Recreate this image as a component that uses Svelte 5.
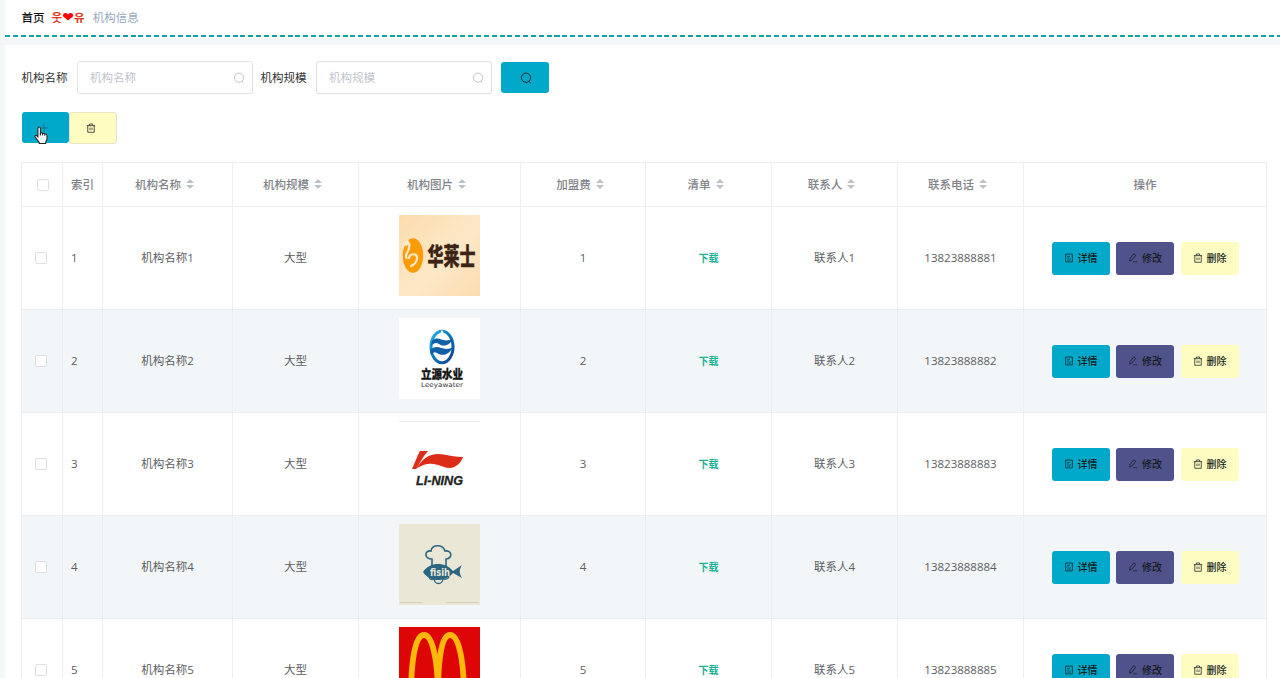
<script>
  let name = "";
  let scale = "";

  const filters = [
    { label: "机构名称", key: "name" },
    { label: "机构规模", key: "scale" },
  ];

  const columns = [
    "机构名称",
    "机构规模",
    "机构图片",
    "加盟费",
    "清单",
    "联系人",
    "联系电话",
  ];

  const widths = [41, 40, 130, 126, 162, 125, 126, 126, 126, 243];

  const rows = [1, 2, 3, 4, 5].map((id) => ({
    id,
    name: `机构名称${id}`,
    scale: "大型",
    fee: id,
    contact: `联系人${id}`,
    phone: `1382388888${id}`,
  }));
</script>

{#snippet searchIcon()}
  <svg class="icon" viewBox="0 0 12 12">
    <circle cx="6" cy="5.7" r="4.6" />
    <path d="M8.8 9.3L10.6 11" />
  </svg>
{/snippet}

{#snippet trashIcon()}
  <svg class="icon" viewBox="0 0 12 12">
    <path d="M1 3.2h10M4 3V1.2h4V3M2.1 3.2v7.9h7.8V3.2M4.8 5.5v3M7.2 5.5v3" />
  </svg>
{/snippet}

<div class="page">
  <nav class="breadcrumb">
    <b>首页</b>
    <span class="separator">웃<i>❤</i>유</span>
    <span class="current">机构信息</span>
  </nav>

  <main>
    <form class="search">
      {#each filters as filter}
        <label for="filter-{filter.key}">{filter.label}</label>
        <div class="field">
          {#if filter.key === "name"}
            <input id="filter-name" placeholder={filter.label} bind:value={name} />
          {:else}
            <input id="filter-scale" placeholder={filter.label} bind:value={scale} />
          {/if}
          {@render searchIcon()}
        </div>
      {/each}
      <button type="button" class="btn primary query" aria-label="查询">
        {@render searchIcon()}
      </button>
    </form>

    <div class="toolbar">
      <button class="btn primary add" aria-label="新增">
        <svg class="icon" viewBox="0 0 12 12"><path d="M6 1v10M1 6h10" /></svg>
        <svg class="cursor" viewBox="0 0 16 20">
          <path
            d="M4.2 11.5V2.4c0-2 2.6-2 2.6 0v5.2c.5-.9 2.2-.7 2.4.4.6-.7 2.1-.5 2.3.6.9-.6 2.3 0 2.3 1.3v3.6c0 1.6-1.3 2.6-1.3 4v1H5.6v-1.2L1.3 11.8c-1-1.5.7-2.7 1.8-1.5z"
          />
          <path d="M6.8 7.6v2.4M9.2 8v2M11.5 8.6v1.6" />
        </svg>
      </button>
      <button class="btn danger remove" aria-label="删除">
        {@render trashIcon()}
      </button>
    </div>

    <table>
      <colgroup>
        {#each widths as width}
          <col style="width: {width}px" />
        {/each}
      </colgroup>
      <thead>
        <tr>
          <th class="check-head"><span class="checkbox"></span></th>
          <th class="index">索引</th>
          {#each columns as column}
            <th>
              <div class="sortable">
                {column}
                <svg class="sort" viewBox="0 0 8 10">
                  <path d="M4 0L8 4H0zM4 10L0 6h8z" />
                </svg>
              </div>
            </th>
          {/each}
          <th>操作</th>
        </tr>
      </thead>
      <tbody>
        {#each rows as row}
          <tr>
            <td class="check"><span class="checkbox"></span></td>
            <td class="index">{row.id}</td>
            <td>{row.name}</td>
            <td>{row.scale}</td>
            <td class="picture">
              <svg viewBox="0 0 81 81">
                {#if row.id === 1}
                  <defs>
                    <linearGradient id="cream" x1="0" y1="0" x2="1" y2="1">
                      <stop offset="0" stop-color="#fbdcae" />
                      <stop offset="0.55" stop-color="#fde8c6" />
                      <stop offset="1" stop-color="#fbdcb0" />
                    </linearGradient>
                  </defs>
                  <rect width="81" height="81" fill="url(#cream)" />
                  <ellipse cx="14" cy="40.5" rx="10.2" ry="17.3" fill="#fb9b06" />
                  <path
                    d="M4 32l1.500-4.500 2 2.500 1-4 2 4-1 5c-2 3-3 6-2 8M10 43c1-5 8-5 8 0 0 4-3 7-6 8"
                    fill="none"
                    stroke="#fdebcc"
                    stroke-width="2.2"
                    stroke-linejoin="round"
                    stroke-linecap="round"
                  />
                  <text x="28.500" y="49.500" class="hualaishi" textLength="48" lengthAdjust="spacingAndGlyphs">华莱士</text>
                {:else if row.id === 2}
                  <defs>
                    <linearGradient id="water" x1="0" y1="0" x2="1" y2="1">
                      <stop offset="0" stop-color="#25b3e8" />
                      <stop offset="0.5" stop-color="#0878ba" />
                      <stop offset="1" stop-color="#103c8b" />
                    </linearGradient>
                  </defs>
                  <rect width="81" height="81" fill="#fff" />
                  <ellipse cx="43" cy="29" rx="11" ry="15.7" fill="none" stroke="url(#water)" stroke-width="3" />
                  <path
                    d="M33 23c7-7 11 4 21-3-3 8-9 9-14 6-3-2-5-1-8 2zM31 32c8-8 13 3 23-3-4 9-12 9-16 6-3-2-4 0-6 2z"
                    fill="#1260a6"
                  />
                  <path d="M43 12c2 2 2 4 0 5-2-1-2-3 0-5z" fill="#fff" />
                  <text x="22" y="61" class="liyuan" textLength="42" lengthAdjust="spacingAndGlyphs">立源水业</text>
                  <text x="22" y="68.5" class="leeya" textLength="42" lengthAdjust="spacingAndGlyphs">Leeyawater</text>
                {:else if row.id === 3}
                  <rect width="81" height="81" fill="#fff" />
                  <rect width="81" height="1" fill="#efefef" />
                  <path d="M21 30h8l-4 5-8 13h-4l6-14z" fill="#dc2d19" />
                  <path
                    d="M17 48c6-10 13-15 22-15 8 0 13 3 25 3-2 6-7 11-14 11-9 0-16-10-33 1z"
                    fill="#dc2d19"
                  />
                  <text x="17" y="64" class="lining" textLength="47" lengthAdjust="spacingAndGlyphs">LI-NING</text>
                {:else if row.id === 4}
                  <rect width="81" height="81" fill="#ebe7d6" />
                  <path
                    d="M33 42v-7c-8 0-8-9-1-8 1-7 12-7 14 0 7-1 8 7 1 8v7"
                    fill="none"
                    stroke="#2b6781"
                    stroke-width="1.6"
                  />
                  <path
                    d="M30 53c1 3 3 3 5 2 1 6 8 6 9 0 3 1 5 0 6-2"
                    fill="#ebe7d6"
                    stroke="#2b6781"
                    stroke-width="1.3"
                  />
                  <path
                    d="M24 48c7-11 23-10 30-1l9-6c-3 5-3 8 0 13l-9-5c-7 9-23 10-30-1z"
                    fill="#2b6781"
                  />
                  <text x="31" y="52" class="fish" textLength="20" lengthAdjust="spacingAndGlyphs">fisih</text>
                  <path class="caption" d="M1 78.500h22M47 78.500h33" />
                {:else}
                  <rect width="81" height="81" fill="#dd0505" />
                  <path
                    d="M12 69C12 35 16 8 25 8s14 28 14 61M39 69C39 35 42 8 51 8s14 27 14 61"
                    fill="none"
                    stroke="#fdb90a"
                    stroke-width="5.8"
                  />
                {/if}
              </svg>
            </td>
            <td>{row.fee}</td>
            <td><a href="#download">下载</a></td>
            <td>{row.contact}</td>
            <td>{row.phone}</td>
            <td class="operate">
              <div class="actions">
                <button class="btn primary">
                  <svg class="icon" viewBox="0 0 12 12">
                    <path d="M2 1.3h8v9.4H2zM4 4h3M4 6h2M4 8.4h4M7.5 6v1" />
                  </svg>
                  详情
                </button>
                <button class="btn edit">
                  <svg class="icon" viewBox="0 0 12 12">
                    <path d="M2 9.8l.5-3.2L6.8 1l2.4 1.8-4.3 5.6zM6 10.7c1.3-1.2 2 .4 3-.2h2" />
                  </svg>
                  修改
                </button>
                <button class="btn danger">
                  {@render trashIcon()}
                  删除
                </button>
              </div>
            </td>
          </tr>
        {/each}
      </tbody>
    </table>
  </main>
</div>

<style>
  :global(body) {
    overflow: hidden;
    background: #f3f7f8;
  }

  .page {
    height: 678px;
    padding-left: 5px;
    overflow: hidden;
    box-sizing: border-box;
    font-family: "Open Sans", "Noto Sans CJK SC", sans-serif;
    font-size: 11.5px;
    color: #5c5e62;
  }

  .breadcrumb {
    display: flex;
    align-items: center;
    height: 38px;
    padding: 0 0 5px 16.5px;
    box-sizing: border-box;
    background:
      repeating-linear-gradient(90deg, #159fac 0 5px, #f4fbfb 5px 7.85px) 0 35px / 100% 2px no-repeat,
      #fff;
  }

  .breadcrumb b {
    font-weight: 500;
    color: #111;
  }

  .separator {
    display: flex;
    align-items: center;
    margin: 0 8px 0 7px;
    font-family: "Noto Sans CJK KR", sans-serif;
    font-size: 11.5px;
    font-weight: 700;
    color: #e23a20;
  }

  .separator i {
    width: 12px;
    font-family: "DejaVu Sans", sans-serif;
    font-size: 14px;
    font-style: normal;
    font-weight: 400;
    line-height: 12px;
    text-align: center;
    color: #f00;
  }

  .current {
    color: #97a8be;
  }

  main {
    height: 640px;
    margin-top: 7px;
    padding: 16px 0 0 16px;
    background: #fff;
  }

  .search {
    display: flex;
    align-items: center;
    height: 33px;
    padding-left: 0.5px;
    color: #333;
  }

  .search label {
    width: 47px;
    margin-right: 8.5px;
    padding-bottom: 1px;
    box-sizing: border-box;
    white-space: nowrap;
  }

  .field {
    display: flex;
    align-items: center;
    width: 176px;
    height: 33px;
    margin-right: 7.5px;
    padding: 0 7px 0 12px;
    box-sizing: border-box;
    border: 1px solid #dfe1e5;
    border-radius: 3px;
    color: #b9bcc2;
  }

  .field input {
    flex: 1;
    min-width: 0;
    padding: 0;
    border: none;
    outline: none;
    background: none;
    font: inherit;
    color: #606266;
  }

  .field input::placeholder {
    color: #bfc3cb;
  }

  .icon {
    flex: none;
    width: 12px;
    height: 12px;
    fill: none;
    stroke: currentColor;
    stroke-width: 0.9;
  }

  .btn {
    display: flex;
    align-items: center;
    justify-content: center;
    gap: 4px;
    width: 58px;
    height: 33px;
    padding: 0;
    border: none;
    border-radius: 3px;
    font: inherit;
    font-size: 10px;
    color: #151c20;
  }

  .btn .icon {
    width: 10px;
    height: 10px;
  }

  .primary {
    background: #00a9c9;
  }

  .edit {
    background: #50528b;
  }

  .danger {
    background: #fffcc2;
  }

  .query {
    width: 48px;
    height: 31px;
    margin-left: 1px;
    padding-left: 3px;
  }

  .query .icon {
    width: 12px;
    height: 12px;
  }

  .toolbar {
    display: flex;
    align-items: center;
    height: 33px;
    margin: 17px 0 18px;
    padding-left: 1px;
  }

  .add {
    position: relative;
    width: 47px;
    height: 31px;
    padding-right: 3px;
    color: #126374;
  }

  .remove {
    width: 48px;
    height: 32px;
    padding-right: 4px;
    border: 1px solid #e8e4c8;
  }

  .cursor {
    position: absolute;
    left: 12px;
    top: 14px;
    width: 15px;
    height: 19px;
    fill: #fff;
    stroke: #222;
    stroke-width: 1.1;
  }

  table {
    width: 1246px;
    table-layout: fixed;
    border-collapse: separate;
    border-spacing: 0;
    border-top: 1px solid #eceeef;
    border-left: 1px solid #eceeef;
  }

  th,
  td {
    padding: 0 0 2px;
    box-sizing: border-box;
    border-right: 1px solid #eceeef;
    border-bottom: 1px solid #eceeef;
    text-align: center;
  }

  th {
    height: 44px;
    font-weight: 500;
    color: #808288;
  }

  td {
    height: 103px;
  }

  tbody tr:nth-child(even) {
    background: #f2f6f9;
  }

  .index {
    padding-left: 8px;
    text-align: left;
  }

  .check-head {
    padding: 0 0 0 1px;
  }

  .check {
    padding: 0 3px 0 0;
  }

  .checkbox {
    display: block;
    width: 12px;
    height: 12px;
    margin: 0 auto;
    box-sizing: border-box;
    border: 1px solid #dcdfe6;
    border-radius: 2px;
    background: #fff;
  }

  .sortable {
    display: flex;
    align-items: center;
    justify-content: center;
    gap: 5px;
    padding-right: 6px;
  }

  .sort {
    width: 8px;
    height: 10px;
    fill: #bdc1c9;
  }

  .picture {
    padding: 8px 0 0;
    vertical-align: top;
  }

  .picture svg {
    display: block;
    width: 81px;
    height: 81px;
    margin: 0 auto;
    overflow: visible;
  }

  .hualaishi {
    font-size: 23.5px;
    font-weight: 900;
    fill: #3b2415;
    stroke: #3b2415;
    stroke-width: 0.4;
  }

  .liyuan {
    font-size: 12.5px;
    font-weight: 900;
    fill: #151515;
    stroke: #151515;
    stroke-width: 0.3;
  }

  .leeya {
    font-family: "DejaVu Sans", sans-serif;
    font-size: 6.6px;
    fill: #333;
  }

  .lining {
    font-family: "Liberation Sans", sans-serif;
    font-size: 12px;
    font-style: italic;
    font-weight: 700;
    fill: #222;
    stroke: #222;
    stroke-width: 0.3;
  }

  .fish {
    font-family: "DejaVu Sans", sans-serif;
    font-size: 11px;
    font-weight: 700;
    fill: #ebe7d6;
  }

  .caption {
    stroke: #cfccbf;
    stroke-width: 0.8;
  }

  a {
    font-size: 10px;
    font-weight: 700;
    text-decoration: none;
    color: #19b393;
  }

  .operate {
    padding: 0;
  }

  .actions {
    display: flex;
    justify-content: center;
    gap: 6.5px;
  }

  .actions .btn {
    padding-bottom: 1px;
    font-weight: 500;
  }
</style>
